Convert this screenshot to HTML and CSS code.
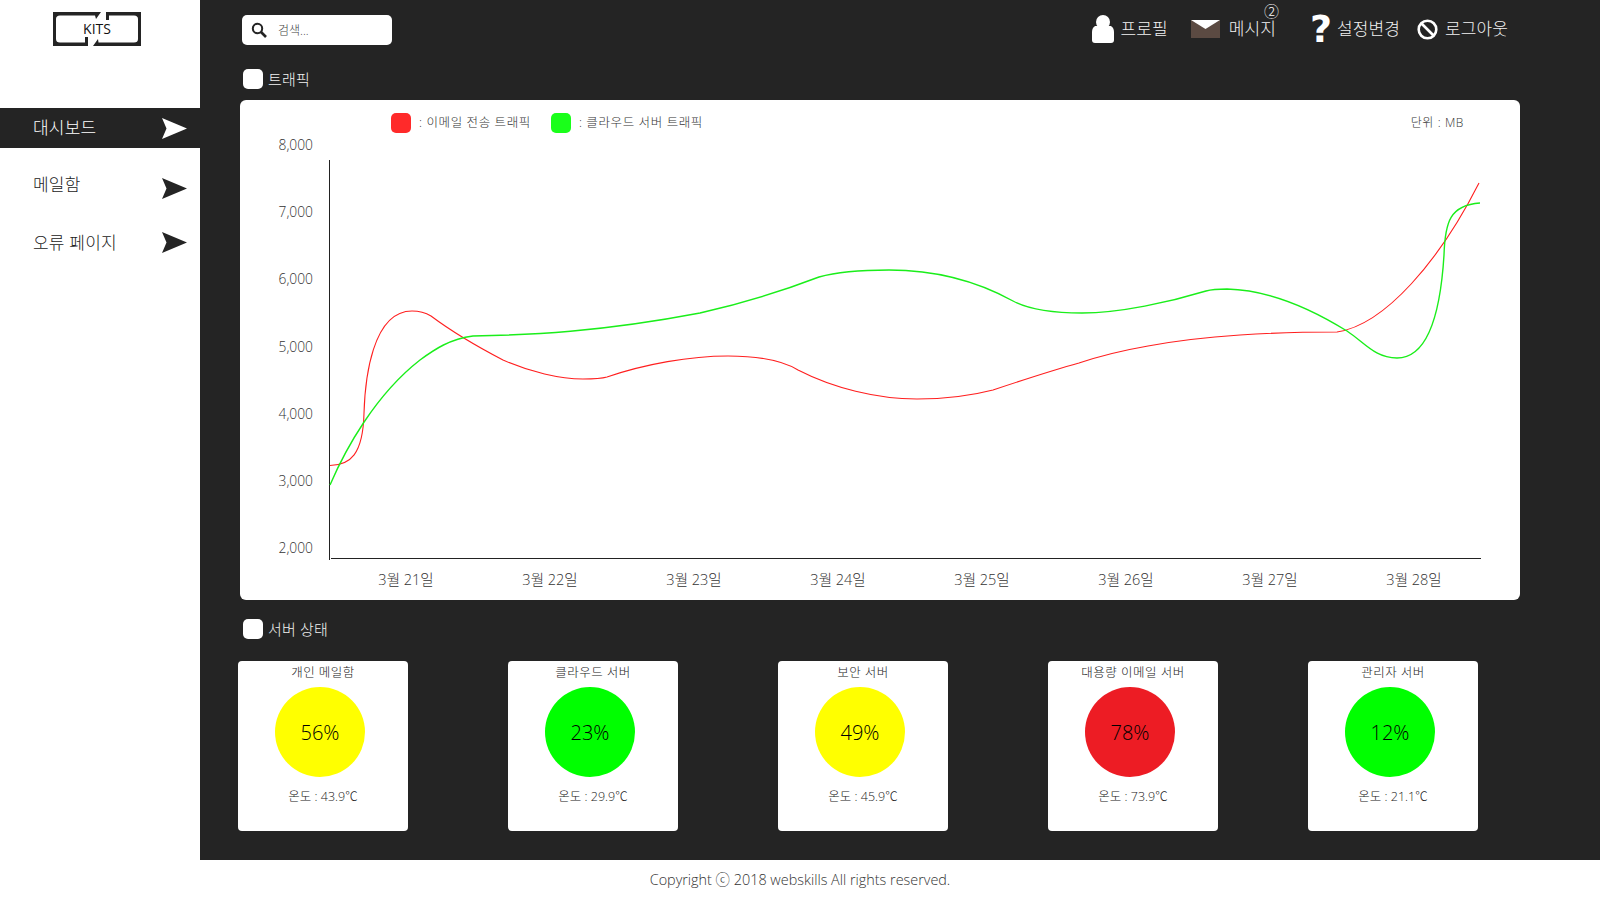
FILE: index.html
```html
<!DOCTYPE html>
<html lang="ko">
<head>
<meta charset="utf-8">
<title>대시보드</title>
<link rel="stylesheet" href="styles.css">
</head>
<body>
<div class="shell">
  <aside class="sidebar">
    <div class="logo">
      <svg class="logo-mark" width="88" height="34" viewBox="53 12 88 34">
        <path d="M53 12H101L96 19L95 15.5H60Q56 15.5 56 19V39Q56 42.5 60 42.5H85V37H88V46H53Z"/>
        <path d="M106 12H141V46H93L98 39L98.5 42.5H134Q138 42.5 138 39V19Q138 15.5 134 15.5H109V20H106Z"/>
      </svg>
      <span class="logo-text">KITS</span>
    </div>
    <nav class="menu">
      <a class="menu-row menu-active"><span>대시보드</span><svg class="arrow" width="25" height="21" viewBox="0 0 25 21"><path d="M0 0L25 10.5L0 21L4.5 10.5Z"/></svg></a>
      <a class="menu-row menu-second"><span class="menu-raised">메일함</span><svg class="arrow" width="25" height="21" viewBox="0 0 25 21"><path d="M0 0L25 10.5L0 21L4.5 10.5Z"/></svg></a>
      <a class="menu-row menu-third"><span>오류 페이지</span><svg class="arrow" width="25" height="21" viewBox="0 0 25 21"><path d="M0 0L25 10.5L0 21L4.5 10.5Z"/></svg></a>
    </nav>
  </aside>
  <main class="main">
    <header class="topbar">
      <div class="search">
        <svg width="16" height="16" viewBox="0 0 16 16"><circle cx="6.5" cy="6.5" r="4.7" fill="none" stroke="#242424" stroke-width="2"/><path d="M10 10L15 15" stroke="#242424" stroke-width="2.6"/></svg>
        <span>검색...</span>
      </div>
      <div class="top-nav">
        <a class="top-item">
          <svg width="22" height="28" viewBox="0 0 22 28"><circle cx="11" cy="7" r="7" fill="#fff"/><path d="M3 11H19Q22 13 22 17V25Q22 28 19 28H3Q0 28 0 25V17Q0 13 3 11Z" fill="#fff"/></svg>
          <span class="top-label">프로필</span>
        </a>
        <a class="top-item top-mail">
          <svg width="29" height="18" viewBox="0 0 29 18"><rect width="29" height="18" fill="#5b4a42"/><path d="M0 0H29L14.5 9Z" fill="#fff"/></svg>
          <span class="top-label">메시지</span>
          <span class="badge">②</span>
        </a>
        <a class="top-item top-help">
          <span class="help-mark">?</span>
          <span class="top-label">설정변경</span>
        </a>
        <a class="top-item top-out">
          <svg width="21" height="21" viewBox="0 0 21 21"><circle cx="10.5" cy="10.5" r="8.8" fill="none" stroke="#fff" stroke-width="2.6"/><path d="M4.5 4.5L16.5 16.5" stroke="#fff" stroke-width="2.6"/></svg>
          <span class="top-label">로그아웃</span>
        </a>
      </div>
    </header>

    <h2 class="section-title title-traffic"><i class="title-box"></i><span>트래픽</span></h2>

    <section class="chart-card">
      <div class="legend">
        <i class="swatch swatch-red"></i><span class="legend-text">: 이메일 전송 트래픽</span>
        <i class="swatch swatch-green"></i><span class="legend-text">: 클라우드 서버 트래픽</span>
        <span class="legend-text unit">단위 : MB</span>
      </div>
      <svg class="chart" width="1280" height="465" viewBox="240 135 1280 465">
        <g class="y-labels">
          <text x="313" y="150">8,000</text>
          <text x="313" y="217">7,000</text>
          <text x="313" y="284">6,000</text>
          <text x="313" y="351.5">5,000</text>
          <text x="313" y="418.5">4,000</text>
          <text x="313" y="486">3,000</text>
          <text x="313" y="553">2,000</text>
        </g>
        <path class="axis" d="M329.5 160V560M331 558.5H1481"/>
        <path class="line-red" d="M330 465.5C350 465 363 455 364 413C365 380 372 311 412 311C420 311 426 313 431 316C455 334 480 348 503 360C530 372 560 379 583 379C592 379 600 379 607 377C645 364 690 356 728 356C752 356 780 359 798 370C833 388 877 399 917 399C942 399 970 396 993 390C1020 381 1050 371 1079 363C1100 356 1125 350 1148 346C1180 340 1210 337 1240 335C1270 333 1305 332 1337 332C1385 325 1440 260 1479 183"/>
        <path class="line-green" d="M330 485C345 450 375 395 420 360C435 349 450 339 473 336C530 335 600 332 700 313C740 304 785 290 819 277C840 271 865 270 889 270C935 270 975 280 1013 301C1030 310 1055 313 1082 313C1120 313 1170 302 1206 291C1213 289 1220 289 1227 289C1270 290 1310 308 1347 331C1365 343 1375 358 1397 358C1425 358 1440 320 1444 255C1445 222 1450 205 1480 203"/>
        <g class="x-labels">
          <text x="406" y="584.5">3월 21일</text>
          <text x="550" y="584.5">3월 22일</text>
          <text x="694" y="584.5">3월 23일</text>
          <text x="838" y="584.5">3월 24일</text>
          <text x="982" y="584.5">3월 25일</text>
          <text x="1126" y="584.5">3월 26일</text>
          <text x="1270" y="584.5">3월 27일</text>
          <text x="1414" y="584.5">3월 28일</text>
        </g>
      </svg>
    </section>

    <h2 class="section-title title-server"><i class="title-box"></i><span>서버 상태</span></h2>

    <section class="servers">
      <article class="server"><h3>개인 메일함</h3><div class="gauge gauge-yellow">56%</div><p>온도 : 43.9℃</p></article>
      <article class="server"><h3>클라우드 서버</h3><div class="gauge gauge-green">23%</div><p>온도 : 29.9℃</p></article>
      <article class="server"><h3>보안 서버</h3><div class="gauge gauge-yellow">49%</div><p>온도 : 45.9℃</p></article>
      <article class="server"><h3>대용량 이메일 서버</h3><div class="gauge gauge-red">78%</div><p>온도 : 73.9℃</p></article>
      <article class="server server-last"><h3>관리자 서버</h3><div class="gauge gauge-green">12%</div><p>온도 : 21.1℃</p></article>
    </section>
  </main>
</div>
<footer class="footer">Copyright ⓒ 2018 webskills All rights reserved.</footer>
</body>
</html>
```

FILE: styles.css
```css
* { box-sizing: border-box; }
html, body { margin: 0; height: 100%; }
body {
  width: 1600px;
  height: 900px;
  overflow: hidden;
  background: #fff;
  color: #242424;
  font-family: "Open Sans", "Noto Sans CJK KR", sans-serif;
  font-weight: 300;
}
.shell { display: flex; height: 860px; }

/* sidebar */
.sidebar { width: 200px; flex: none; background: #fff; }
.logo { position: relative; height: 108px; padding: 12px 0 0 53px; }
.logo-mark { display: block; fill: #242424; }
.logo-text {
  position: absolute;
  left: 53px;
  top: 19px;
  width: 88px;
  text-align: center;
  font-size: 14px;
  line-height: 20px;
  font-weight: 400;
  color: #111;
}
.menu { display: flex; flex-direction: column; }
.menu-row {
  display: flex;
  align-items: center;
  justify-content: space-between;
  height: 40px;
  padding: 0 13px 0 33px;
  font-size: 17px;
  letter-spacing: 0.2px;
  color: #222;
  fill: #242424;
}
.menu-row span { padding-bottom: 2px; }
.menu-active { background: #242424; color: #fff; fill: #fff; }
.menu-active span { padding-bottom: 4px; }
.menu-second { margin-top: 20px; }
.menu-third { margin-top: 14px; }
.menu-raised { margin-top: -8px; }

/* main */
.main { flex: 1; background: #242424; padding-left: 38px; }
.topbar {
  display: flex;
  align-items: flex-start;
  justify-content: space-between;
  height: 69px;
  padding: 15px 92px 0 4px;
}
.search {
  display: flex;
  align-items: center;
  gap: 11px;
  width: 150px;
  height: 30px;
  padding-left: 9px;
  background: #fff;
  border-radius: 5px;
  font-size: 12px;
  color: #444;
}
.top-nav { display: flex; align-items: center; height: 28px; color: #f2f2f2; font-size: 17px; letter-spacing: 0.1px; }
.top-item { position: relative; display: flex; align-items: center; gap: 7px; height: 28px; }
.top-label { line-height: 16px; }
.top-mail { margin-left: 23px; gap: 9px; }
.top-help { margin-left: 34px; }
.top-out { margin-left: 17px; gap: 7px; }
.badge { position: absolute; right: -3px; top: -11px; font-size: 15px; line-height: 14px; color: #fff; }
.help-mark {
  width: 20px;
  text-align: center;
  font-family: "DejaVu Sans", sans-serif;
  font-weight: 700;
  font-size: 38px;
  line-height: 30px;
  color: #fff;
}

.section-title {
  display: flex;
  align-items: center;
  gap: 5px;
  margin: 0 0 0 5px;
  height: 20px;
  font-size: 15px;
  font-weight: 300;
  letter-spacing: 0.2px;
  color: #f2f2f2;
}
.section-title span { padding-bottom: 2px; }
.title-box { width: 20px; height: 20px; background: #fff; border-radius: 5px; }
.title-traffic { margin-bottom: 11px; }
.title-server { margin-top: 19px; }

/* chart */
.chart-card {
  display: flex;
  flex-direction: column;
  width: 1280px;
  height: 500px;
  margin-left: 2px;
  background: #fff;
  border-radius: 6px;
  overflow: hidden;
}
.legend {
  display: flex;
  align-items: center;
  height: 35px;
  padding: 13px 0 2px 151px;
  font-size: 12.5px;
  letter-spacing: 0.6px;
  color: #333;
}
.swatch { width: 20px; height: 20px; border-radius: 5px; }
.swatch-red { background: #ff2a2a; }
.swatch-green { background: #1aff1a; margin-left: 20px; }
.legend-text { margin-left: 8px; padding-bottom: 3px; }
.unit { margin-left: auto; padding-right: 56px; font-size: 12px; }
.chart { display: block; }
.y-labels text { text-anchor: end; font-size: 13.8px; fill: #333; }
.x-labels text { text-anchor: middle; font-size: 14.5px; fill: #333; }
.axis { fill: none; stroke: #222; stroke-width: 1; }
.line-red { fill: none; stroke: #ff1f1f; stroke-width: 1.1; }
.line-green { fill: none; stroke: #1aee1a; stroke-width: 1.4; }

/* servers */
.servers { display: flex; gap: 100px; margin-top: 22px; }
.server {
  display: flex;
  flex-direction: column;
  align-items: center;
  width: 170px;
  height: 170px;
  background: #fff;
  border-radius: 4px;
}
.server-last { margin-left: -10px; }
.server h3 { margin: 2px 0 0; height: 20px; font-size: 12.5px; line-height: 20px; font-weight: 300; letter-spacing: 0.5px; color: #222; }
.server p { margin: 10px 0 0; font-size: 12.5px; line-height: 20px; color: #222; }
.gauge {
  display: flex;
  align-items: center;
  justify-content: center;
  width: 90px;
  height: 90px;
  margin: 4px 6px 0 0;
  border-radius: 50%;
  font-size: 20px;
  color: #000;
}
.gauge-yellow { background: #ffff00; }
.gauge-green { background: #00ff00; }
.gauge-red { background: #ed1c24; }

.footer {
  height: 40px;
  text-align: center;
  font-size: 14.4px;
  line-height: 40px;
  color: #333;
}
```
